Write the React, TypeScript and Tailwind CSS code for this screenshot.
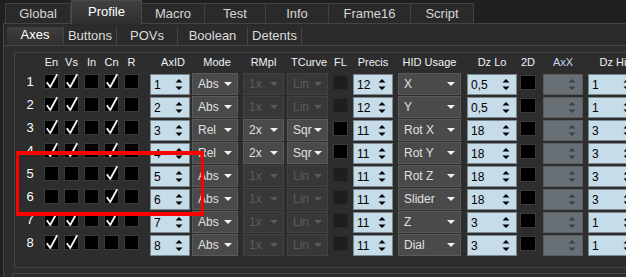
import clsx from "clsx"

type RowData = {
	n: number
	checks: boolean[]
	mode: string
	rmpl?: string
	tcurve?: string
	fl: boolean
	precis: number
	hid: string
	dzLo: string
	dzHi: string
}

const rows: RowData[] = [
	{ n: 1, checks: [true, true, false, true, false], mode: "Abs", fl: false, precis: 12, hid: "X", dzLo: "0,5", dzHi: "1" },
	{ n: 2, checks: [true, true, false, true, false], mode: "Abs", fl: false, precis: 12, hid: "Y", dzLo: "0,5", dzHi: "1" },
	{ n: 3, checks: [true, true, false, true, false], mode: "Rel", rmpl: "2x", tcurve: "Sqr", fl: true, precis: 11, hid: "Rot X", dzLo: "18", dzHi: "3" },
	{ n: 4, checks: [true, true, false, true, false], mode: "Rel", rmpl: "2x", tcurve: "Sqr", fl: true, precis: 11, hid: "Rot Y", dzLo: "18", dzHi: "3" },
	{ n: 5, checks: [false, false, false, true, false], mode: "Abs", fl: false, precis: 11, hid: "Rot Z", dzLo: "18", dzHi: "3" },
	{ n: 6, checks: [false, false, false, true, false], mode: "Abs", fl: false, precis: 11, hid: "Slider", dzLo: "18", dzHi: "3" },
	{ n: 7, checks: [true, true, false, true, false], mode: "Abs", fl: false, precis: 11, hid: "Z", dzLo: "3", dzHi: "1" },
	{ n: 8, checks: [true, true, false, false, false], mode: "Abs", fl: false, precis: 11, hid: "Dial", dzLo: "3", dzHi: "1" },
]

const topTabs = [
	{ label: "Global", cls: "w-[66px]" },
	{ label: "Profile", cls: "w-[71px]", active: true },
	{ label: "Macro", cls: "w-[63px]" },
	{ label: "Test", cls: "w-[61px]" },
	{ label: "Info", cls: "w-[63px]" },
	{ label: "Frame16", cls: "w-[82px]" },
	{ label: "Script", cls: "w-[63px]" },
]

const subTabs = [
	{ label: "Axes", cls: "w-[57px]", active: true },
	{ label: "Buttons", cls: "w-[53px]" },
	{ label: "POVs", cls: "w-[61px]" },
	{ label: "Boolean", cls: "w-[70px]" },
	{ label: "Detents", cls: "w-[54px]" },
]

// column offsets, same for header and rows
const checkCls = ["ml-[4px]", "ml-[5px]", "ml-[5px]", "ml-[5px]", "ml-[5px]"]
const C = {
	axid: "ml-[11px] w-[40px]",
	mode: "ml-[2px] w-[46px]",
	rmpl: "ml-[5px] w-[41px]",
	tcurve: "ml-[3px] w-[41px]",
	fl: "ml-[5px] w-[15px]",
	precis: "ml-[5px] w-[40px]",
	hid: "ml-[5px] w-[63px]",
	dzlo: "ml-[6px] w-[50px]",
	d2: "ml-[3px] w-[16px]",
	axx: "ml-[7px] w-[40px]",
	dzhi: "ml-[5px] w-[50px]",
}

function Check({ on, className }: { on: boolean; className?: string }) {
	return (
		<div className={clsx("w-[15px] h-[15px] shrink-0 bg-black border border-[#3a3a3a] relative", className)}>
			{on ? (
				<svg className="absolute left-[-1px] top-[-2px] overflow-visible" width="15" height="16" viewBox="0 0 15 16">
					<path d="M2.8 9.2 L6.2 14 L13.2 1.2" fill="none" stroke="#f4f4f4" strokeWidth="1.8" strokeLinejoin="round" />
				</svg>
			) : null}
		</div>
	)
}

function Spin({ value, disabled, className }: { value?: string | number; disabled?: boolean; className: string }) {
	return (
		<div
			className={clsx(
				"h-[21px] shrink-0 border flex items-center justify-between pl-[3px] pr-[6px]",
				disabled ? "bg-[#687076] border-[#565c60]" : "bg-[#c6dce8] border-[#7b8890]",
				className
			)}
		>
			<span className="text-[12px] leading-none text-black">{value}</span>
			<svg width="8" height="13" viewBox="0 0 8 13" className="shrink-0">
				<path d="M0.5 4.5 L4 1 L7.5 4.5 Z M0.5 8.5 L7.5 8.5 L4 12 Z" fill={disabled ? "#3a4044" : "#000000"} />
			</svg>
		</div>
	)
}

function Combo({ value, disabled, className }: { value: string; disabled?: boolean; className: string }) {
	return (
		<div
			className={clsx(
				"h-[22px] -mt-[1px] shrink-0 border flex items-center justify-between pl-[5px] pr-[5px]",
				disabled ? "bg-[#383838] border-[#424242] text-[#5c5c5c]" : "bg-[#4a4a4a] border-[#5a5a5a] text-[#e0e0e0]",
				className
			)}
		>
			<span className="text-[12px] leading-none whitespace-nowrap">{value}</span>
			<svg width="8" height="4" viewBox="0 0 8 4" className="shrink-0">
				<path d="M0 0 H8 L4 4 Z" fill={disabled ? "#5a5a5a" : "#f2f2f2"} />
			</svg>
		</div>
	)
}

function Box({ dark, className }: { dark: boolean; className: string }) {
	return (
		<div
			className={clsx(
				"h-[15px] mt-[1px] shrink-0 border",
				dark ? "bg-black border-[#3a3a3a]" : "bg-[#1e1e1e] border-[#282828]",
				className
			)}
		/>
	)
}

function Head({ label, className, blue }: { label: string; className: string; blue?: boolean }) {
	return (
		<div className={clsx("shrink-0 flex justify-center whitespace-nowrap", className)}>
			<span className={clsx("text-[11px] leading-[13px]", blue ? "text-[#c4daf2]" : "text-[#eef2f8]")}>{label}</span>
		</div>
	)
}

function AxisRow({ r }: { r: RowData }) {
	return (
		<div className="flex items-start h-[23px]">
			<div className="w-[20px] shrink-0 text-center text-[13px] leading-[15px] text-white">{r.n}</div>
			{r.checks.map((c, i) => (
				<Check key={i} on={c} className={checkCls[i]} />
			))}
			<Spin value={r.n} className={C.axid} />
			<Combo value={r.mode} className={C.mode} />
			<Combo value={r.rmpl ?? "1x"} disabled={!r.rmpl} className={C.rmpl} />
			<Combo value={r.tcurve ?? "Lin"} disabled={!r.tcurve} className={C.tcurve} />
			<Box dark={r.fl} className={C.fl} />
			<Spin value={r.precis} className={C.precis} />
			<Combo value={r.hid} className={C.hid} />
			<Spin value={r.dzLo} className={C.dzlo} />
			<Box dark className={C.d2} />
			<Spin disabled className={C.axx} />
			<Spin value={r.dzHi} className={C.dzhi} />
		</div>
	)
}

export default function App() {
	return (
		<div className="w-[626px] h-[277px] overflow-hidden relative bg-[#202020] font-['Liberation_Sans',Arial,sans-serif]">
			{/* top tabs */}
			<div className="flex items-end h-[23px] pl-[5px]">
				{topTabs.map((t) =>
					t.active ? (
						<div
							key={t.label}
							className={clsx(
								"h-[24px] -mb-[1px] relative z-10 border-x border-t border-[#4a4a4a] bg-gradient-to-b from-[#404040] to-[#2f2f2f] flex justify-center pt-[3px] text-[13px] leading-[15px] text-white",
								t.cls
							)}
						>
							{t.label}
						</div>
					) : (
						<div
							key={t.label}
							className={clsx(
								"h-[20px] border-r border-t border-[#424242] first:border-l bg-[#2a2a2a] flex items-center justify-center text-[13px] text-[#d6d6d6]",
								t.cls
							)}
						>
							{t.label}
						</div>
					)
				)}
			</div>

			{/* panel */}
			<div className="ml-[3px] border-l border-t border-[#444] bg-[#2d2d2d] h-[254px]">
				<div className="h-[22px] flex items-end pl-[3px] bg-[#2a2a2a] border-b border-[#454545]">
					{subTabs.map((t) => (
						<div
							key={t.label}
							className={clsx(
								"h-[18px] flex justify-center text-[13px] border-r border-[#444]",
								t.active
									? "bg-gradient-to-b from-[#3e3e3e] to-[#303030] text-white leading-[14px] pt-[1px]"
									: "bg-[#2b2b2b] text-[#dcdcdc] items-center",
								t.cls
							)}
						>
							{t.label}
						</div>
					))}
				</div>

				{/* axes group */}
				<div className="mt-[6px] ml-[10px] w-[700px] h-[216px] border border-[#464646] pl-[5px]">
					<div className="flex items-start h-[21px] pt-[3px]">
						<div className="w-[20px] shrink-0" />
						<Head label="En" className={clsx("w-[15px]", checkCls[0])} />
						<Head label="Vs" className={clsx("w-[15px]", checkCls[1])} />
						<Head label="In" className={clsx("w-[15px]", checkCls[2])} />
						<Head label="Cn" className={clsx("w-[15px]", checkCls[3])} />
						<Head label="R" className={clsx("w-[15px]", checkCls[4])} />
						<Head label="AxID" className={clsx(C.axid, "pl-[6px]")} />
						<Head label="Mode" className={clsx(C.mode, "pl-[4px]")} />
						<Head label="RMpl" className={C.rmpl} />
						<Head label="TCurve" className={clsx(C.tcurve, "pl-[3px]")} />
						<Head label="FL" className={C.fl} />
						<Head label="Precis" className={C.precis} />
						<Head label="HID Usage" className={C.hid} />
						<Head label="Dz Lo" className={C.dzlo} />
						<Head label="2D" className={C.d2} />
						<Head label="AxX" blue className={C.axx} />
						<Head label="Dz Hi" className={C.dzhi} />
					</div>
					{rows.map((r) => (
						<AxisRow key={r.n} r={r} />
					))}
				</div>

				<div className="mt-[5px] ml-[8px] w-[700px] h-[20px] border-l border-t border-[#464646]" />
			</div>

			{/* red highlight */}
			<div className="absolute left-[16px] top-[151px] w-[188px] h-[65px] border-x-[3px] border-y-[4px] border-[#ff0000] z-20" />
		</div>
	)
}
